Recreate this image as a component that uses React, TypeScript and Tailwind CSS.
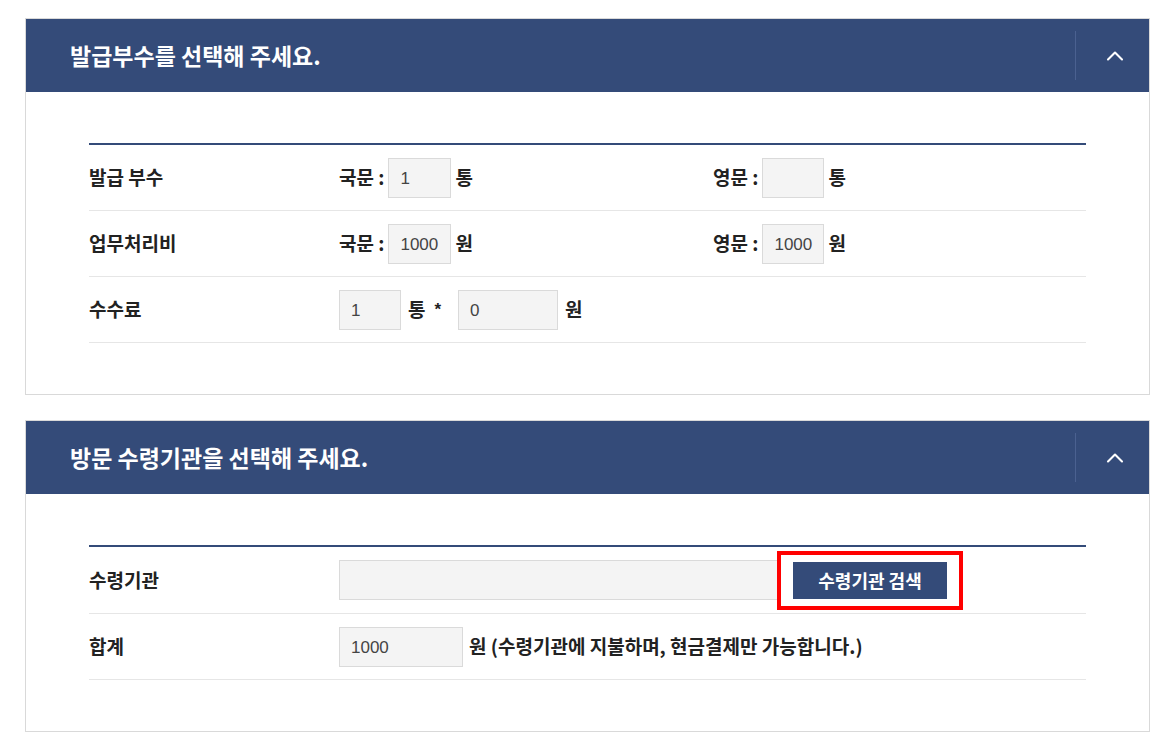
import {ChevronUp} from "lucide-react";
import {PropsWithChildren} from "react";

const KR = "font-['Malgun_Gothic','Noto_Sans_CJK_KR',sans-serif]";
const NUM = "font-['Liberation_Sans','Noto_Sans_CJK_KR',sans-serif]";

interface PanelProps {
  title: string;
}

const Panel = ({title, children}: PropsWithChildren<PanelProps>) => {
  return (
    <section className="border border-[#d9d9d9] bg-white">
      <header className="flex h-[73px] items-center justify-between bg-[#344b79] pl-[44px]">
        <h2 className={`${KR} text-[23px] font-bold text-white`}>{title}</h2>
        <div className="flex h-[49px] w-[74px] items-center justify-center border-l border-[#4b6190]">
          <ChevronUp className="ml-1 h-7 w-7 text-white" strokeWidth={1.8} />
        </div>
      </header>
      <div className="px-[63px] pb-[51px] pt-[51px]">
        <div className="border-t-2 border-[#344b79]">{children}</div>
      </div>
    </section>
  );
};

const Row = ({label, children}: PropsWithChildren<{label: string}>) => (
  <div className="flex h-[66px] items-center border-b border-[#e6e6e6]">
    <div className={`${KR} w-[250px] text-[19px] font-semibold text-[#222]`}>{label}</div>
    <div className="flex flex-1 items-center">{children}</div>
  </div>
);

const Box = ({value, w}: {value: string; w: string}) => (
  <div
    className={`${NUM} ${w} flex h-[40px] items-center border border-[#dadada] bg-[#f4f4f4] pl-[11px] pt-[2px] text-[17px] text-[#444]`}
  >
    {value}
  </div>
);

const Txt = ({children}: PropsWithChildren) => (
  <span className={`${KR} text-[19px] font-semibold text-[#222]`}>{children}</span>
);

export default function App() {
  return (
    <div className="min-h-[734px] bg-white px-[25px] pt-[18px]">
      <div className="w-[1125px] flex flex-col gap-[25px]">
        <Panel title="발급부수를 선택해 주세요.">
          <Row label="발급 부수">
            <div className="flex w-[374px] items-center gap-[4px]">
              <Txt>국문 :</Txt>
              <Box value="1" w="w-[63px]" />
              <Txt>통</Txt>
            </div>
            <div className="flex items-center gap-[4px]">
              <Txt>영문 :</Txt>
              <Box value="" w="w-[62px]" />
              <Txt>통</Txt>
            </div>
          </Row>
          <Row label="업무처리비">
            <div className="flex w-[374px] items-center gap-[4px]">
              <Txt>국문 :</Txt>
              <Box value="1000" w="w-[63px]" />
              <Txt>원</Txt>
            </div>
            <div className="flex items-center gap-[4px]">
              <Txt>영문 :</Txt>
              <Box value="1000" w="w-[62px]" />
              <Txt>원</Txt>
            </div>
          </Row>
          <Row label="수수료">
            <div className="flex items-center gap-[7px]">
              <Box value="1" w="w-[62px]" />
              <Txt>통</Txt>
              <span className={`${NUM} ml-[2px] mr-[10px] text-[17px] font-bold text-[#222]`}>*</span>
              <Box value="0" w="w-[100px]" />
              <Txt>원</Txt>
            </div>
          </Row>
        </Panel>

        <Panel title="방문 수령기관을 선택해 주세요.">
          <div className="flex h-[67px] items-center border-b border-[#e6e6e6]">
            <div className={`${KR} w-[250px] text-[19px] font-semibold text-[#222]`}>수령기관</div>
            <div className="h-[40px] w-[439px] border border-[#dadada] bg-[#f4f4f4]" />
            <div className="ml-[-1px] border-[4px] border-[#ff0000] px-[12px] py-[7px]">
              <button
                className={`${KR} h-[37px] w-[154px] bg-[#344b79] text-[18px] font-bold text-white`}
              >
                수령기관 검색
              </button>
            </div>
          </div>
          <Row label="합계">
            <div className="flex items-center gap-[6px]">
              <Box value="1000" w="w-[124px]" />
              <Txt>원 (수령기관에 지불하며, 현금결제만 가능합니다.)</Txt>
            </div>
          </Row>
        </Panel>
      </div>
    </div>
  );
}
